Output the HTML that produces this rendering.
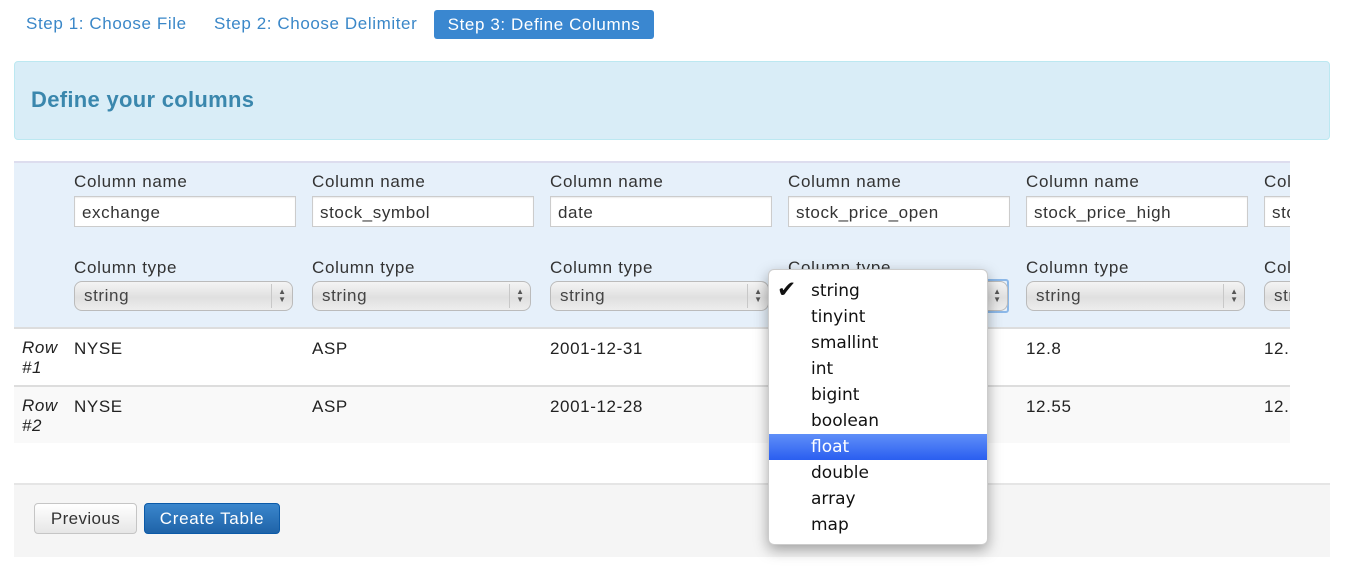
<!DOCTYPE html>
<html><head><meta charset="utf-8"><style>
body{margin:0;width:1347px;height:573px;overflow:hidden;background:#fff;font-family:"Liberation Sans",Helvetica,Arial,sans-serif;font-size:16px;color:#333;position:relative}
.a{position:absolute}
.step{top:14px;font-size:17px;letter-spacing:.6px;color:#3a87c8;line-height:20px;white-space:nowrap}
.act{left:434px;top:10px;width:220px;height:29px;background:#3a87d0;border-radius:3px;color:#fff;font-size:17px;letter-spacing:.6px;line-height:29px;text-align:center}
.lbl{font-size:17px;letter-spacing:.7px;color:#333;white-space:nowrap}
.inp{width:222px;height:31px;border:1px solid #ccc;background:#fff;box-sizing:border-box;padding-left:7px;padding-top:2px;line-height:28px;font-size:17px;letter-spacing:.6px;color:#333;box-shadow:inset 0 1px 1px rgba(0,0,0,.08);white-space:nowrap;overflow:hidden}
.sel{width:219px;height:30px;border:1px solid #bbb;border-radius:8px;box-sizing:border-box;background:linear-gradient(#f4f4f4,#e0e0e0 55%,#ededed);padding-left:9px;line-height:27px;font-size:17px;letter-spacing:.6px;color:#444;overflow:hidden;white-space:nowrap}
.sel:after{content:"";position:absolute;right:20px;top:2px;bottom:2px;border-left:1px solid #c8c8c8}
.arr{position:absolute;right:6px;top:6px;font-size:8px;line-height:8px;color:#555;letter-spacing:0}
.cell{font-size:17px;letter-spacing:.6px;color:#222}
.menu div{height:26px;line-height:26px;padding-left:42px;font-family:"DejaVu Sans",sans-serif;font-size:17px;color:#111}
</style></head><body>
<div class="a step" style="left:26px">Step 1: Choose File</div>
<div class="a step" style="left:214px">Step 2: Choose Delimiter</div>
<div class="a act">Step 3: Define Columns</div>
<div class="a" style="left:14px;top:61px;width:1314px;height:77px;background:#d9edf7;border:1px solid #bce8f1;border-radius:4px"></div>
<div class="a" style="left:31px;top:87px;font-size:22px;letter-spacing:.3px;font-weight:bold;color:#3a87ad">Define your columns</div>

<div class="a" style="left:14px;top:161px;width:1276px;height:166px;background:#e6f0fa;border-top:2px solid #dde"></div>
<div class="a" style="left:14px;top:327px;width:1276px;height:2px;background:#ddd"></div>
<div class="a" style="left:14px;top:385px;width:1276px;height:2px;background:#ddd"></div>
<div class="a" style="left:14px;top:387px;width:1276px;height:56px;background:#f9f9f9"></div>
<div class="a cell" style="left:22px;top:338px;font-style:italic;line-height:20px">Row<br>#1</div>
<div class="a cell" style="left:22px;top:396px;font-style:italic;line-height:20px">Row<br>#2</div>

<div class="a" style="left:1264px;top:162px;width:26px;height:165px;overflow:hidden">
<div class="a lbl" style="left:0;top:10px">Column name</div>
<div class="a inp" style="left:0;top:34px">stock</div>
<div class="a lbl" style="left:0;top:96px">Column type</div>
<div class="a sel" style="left:0;top:119px">string</div>
</div>
<div class="a cell" style="left:1264px;top:339px;width:26px;overflow:hidden">12.</div>
<div class="a cell" style="left:1264px;top:397px;width:26px;overflow:hidden">12.</div>

<div class="a lbl" style="left:74px;top:172px">Column name</div><div class="a inp" style="left:74px;top:196px">exchange</div>
<div class="a lbl" style="left:312px;top:172px">Column name</div><div class="a inp" style="left:312px;top:196px">stock_symbol</div>
<div class="a lbl" style="left:550px;top:172px">Column name</div><div class="a inp" style="left:550px;top:196px">date</div>
<div class="a lbl" style="left:788px;top:172px">Column name</div><div class="a inp" style="left:788px;top:196px">stock_price_open</div>
<div class="a lbl" style="left:1026px;top:172px">Column name</div><div class="a inp" style="left:1026px;top:196px">stock_price_high</div>

<div class="a lbl" style="left:74px;top:258px">Column type</div><div class="a sel" style="left:74px;top:281px">string<span class="arr">▲<br>▼</span></div>
<div class="a lbl" style="left:312px;top:258px">Column type</div><div class="a sel" style="left:312px;top:281px">string<span class="arr">▲<br>▼</span></div>
<div class="a lbl" style="left:550px;top:258px">Column type</div><div class="a sel" style="left:550px;top:281px">string<span class="arr">▲<br>▼</span></div>
<div class="a lbl" style="left:788px;top:258px">Column type</div>
<div class="a" style="left:786px;top:279px;width:223px;height:34px;border:2px solid #8cb8e8;border-radius:3px;box-sizing:border-box"></div>
<div class="a sel" style="left:789px;top:281px">string<span class="arr">▲<br>▼</span></div>
<div class="a lbl" style="left:1026px;top:258px">Column type</div><div class="a sel" style="left:1026px;top:281px">string<span class="arr">▲<br>▼</span></div>

<div class="a cell" style="left:74px;top:339px">NYSE</div><div class="a cell" style="left:312px;top:339px">ASP</div><div class="a cell" style="left:550px;top:339px">2001-12-31</div><div class="a cell" style="left:1026px;top:339px">12.8</div>
<div class="a cell" style="left:74px;top:397px">NYSE</div><div class="a cell" style="left:312px;top:397px">ASP</div><div class="a cell" style="left:550px;top:397px">2001-12-28</div><div class="a cell" style="left:1026px;top:397px">12.55</div>

<div class="a" style="left:14px;top:483px;width:1316px;height:72px;background:#f5f5f5;border-top:2px solid #e5e5e5"></div>
<div class="a" style="left:34px;top:503px;width:103px;height:31px;box-sizing:border-box;border:1px solid #c5c5c5;border-radius:4px;background:linear-gradient(#fff,#e6e6e6);text-align:center;line-height:29px;font-size:17px;letter-spacing:.4px;color:#333">Previous</div>
<div class="a" style="left:144px;top:503px;width:136px;height:31px;box-sizing:border-box;border:1px solid #0b5aa8;border-radius:4px;background:linear-gradient(#3a86cc,#1f63a8);text-align:center;line-height:29px;font-size:17px;letter-spacing:.7px;color:#fff">Create Table</div>

<div class="a menu" style="left:768px;top:269px;width:220px;height:276px;background:#fff;border-radius:6px;box-shadow:0 5px 14px rgba(0,0,0,.35);border:1px solid #ccc;box-sizing:border-box;padding-top:8px">
<div style="position:relative"><span style="position:absolute;left:8px;top:-1px;font-size:23px;font-weight:bold">✔</span>string</div>
<div>tinyint</div><div>smallint</div><div>int</div><div>bigint</div><div>boolean</div>
<div style="background:linear-gradient(#5f8ff8,#2a5ef0);color:#fff">float</div>
<div>double</div><div>array</div><div>map</div>
</div>
</body></html>
